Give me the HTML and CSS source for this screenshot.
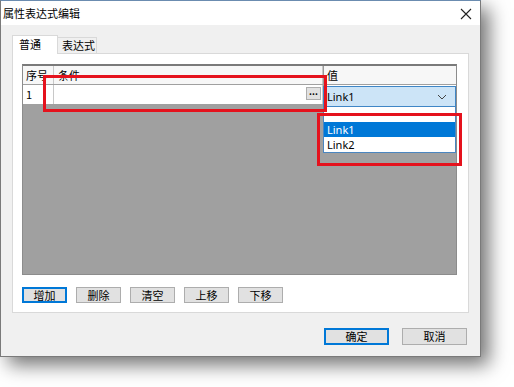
FILE: index.html
```html
<html>
<head>
<title>属性表达式编辑</title>
<link rel="stylesheet" href="styles.css">
</head>
<body>
<div class="window">
  <div class="titlebar">
    <span class="title">属性表达式编辑</span>
    <svg class="close" width="12" height="12" viewBox="0 0 12 12"><path d="M1 1 L11 11 M11 1 L1 11" stroke="#222" stroke-width="1.1"/></svg>
  </div>
  <div class="client">
    <div class="tabs">
      <div class="tab active">普通</div>
      <div class="tab">表达式</div>
    </div>
    <div class="panel">
      <div class="grid">
        <div class="row head">
          <div class="cell c1">序号</div>
          <div class="cell c2">条件</div>
          <div class="cell c3">值</div>
        </div>
        <div class="row">
          <div class="cell c1">1</div>
          <div class="cell c2"><span class="dots">...</span></div>
          <div class="cell c3"></div>
        </div>
      </div>
      <div class="actions">
        <button class="btn default">增加</button>
        <button class="btn">删除</button>
        <button class="btn">清空</button>
        <button class="btn">上移</button>
        <button class="btn">下移</button>
      </div>
    </div>
    <div class="footer">
      <button class="btn wide default">确定</button>
      <button class="btn wide">取消</button>
    </div>
  </div>
</div>

<!-- combo editor + open list over the grid -->
<div class="combo">
  <span>Link1</span>
  <svg width="10" height="6" viewBox="0 0 10 6"><path d="M1 1 L5 5 L9 1" fill="none" stroke="#444" stroke-width="1"/></svg>
</div>
<ul class="droplist">
  <li></li>
  <li class="sel">Link1</li>
  <li>Link2</li>
</ul>

<!-- red annotation boxes -->
<div class="mark mark1"></div>
<div class="mark mark2"></div>
</body>
</html>
```

FILE: styles.css
```css
body {
  margin: 0;
  background: white;
  font-family: "Noto Sans CJK SC", "Noto Sans", sans-serif;
  font-size: 11px;
  color: #000;
}

.window {
  width: 481px;
  height: 357px;
  box-sizing: border-box;
  border: 1px solid #7a7a7a;
  border-top-color: #6b8cb0;
  background: #f0f0f0;
  box-shadow: 8px 8px 18px rgba(0, 0, 0, 0.55);
  display: flex;
  flex-direction: column;
}

.titlebar {
  height: 24px;
  background: white;
  display: flex;
  align-items: center;
  justify-content: space-between;
  padding: 0 8px 0 2px;
}
.title { font-size: 11px; }
.close { margin-top: 1px; }

.client {
  padding: 10px 12px 0 11px;
  display: flex;
  flex-direction: column;
}

.tabs {
  display: flex;
  align-items: flex-end;
  height: 18px;
  position: relative;
  z-index: 1;
}
.tab {
  height: 16px;
  box-sizing: border-box;
  border: 1px solid #d9d9d9;
  border-bottom: none;
  background: #f0f0f0;
  line-height: 14px;
  padding: 0 0 0 4px;
  width: 40px;
  margin-left: -1px;
  white-space: nowrap;
}
.tab.active {
  height: 19px;
  width: 46px;
  margin-left: 0;
  margin-bottom: -1px;
  background: white;
  padding-left: 6px;
  line-height: 17px;
  position: relative;
  z-index: 2;
}

.panel {
  width: 457px;
  height: 260px;
  box-sizing: border-box;
  border: 1px solid #d9d9d9;
  background: white;
  padding: 10px 0 0 9px;
}

.grid {
  width: 435px;
  height: 211px;
  box-sizing: border-box;
  background: #a0a0a0;
  border: 1px solid #8c8c8c;
  border-top: 2px solid #7a7a7a;
}
.row {
  display: flex;
  height: 19px;
  background: white;
  border-bottom: 1px solid #a0a0a0;
}
.row.head {
  height: 18px;
  background: #f7f7f7;
}
.cell {
  box-sizing: border-box;
  border-right: 1px solid #c8c8c8;
  padding-left: 3px;
  line-height: 18px;
  position: relative;
}
.c1 { width: 31px; }
.c2 { width: 269px; }
.c3 { flex: 1; border-right: none; border-left: 1px solid #9a9a9a; }
.head .c2 { padding-left: 4px; }

.dots {
  position: absolute;
  right: 1px;
  top: 2px;
  width: 15px;
  height: 13px;
  box-sizing: border-box;
  background: #e1e1e1;
  border: 1px solid #adadad;
  font-size: 9px;
  line-height: 8px;
  text-align: center;
  font-weight: bold;
}

.actions {
  display: flex;
  gap: 9px;
  margin-top: 12px;
}
.btn {
  width: 45px;
  height: 16px;
  box-sizing: border-box;
  background: #e1e1e1;
  border: 1px solid #adadad;
  font-family: inherit;
  font-size: 11px;
  padding: 0;
  line-height: 13px;
  color: #000;
}
.btn.default {
  border-color: #0078d7;
  box-shadow: inset 0 0 0 1px #0078d7;
}
.btn.wide {
  width: 65px;
  height: 17px;
}

.footer {
  display: flex;
  justify-content: flex-end;
  gap: 13px;
  padding: 15px 1px 0 0;
}

.combo {
  position: absolute;
  left: 323px;
  top: 86px;
  width: 133px;
  height: 21px;
  box-sizing: border-box;
  background: #cce4f7;
  border: 1px solid #3f86c6;
  font-family: "Noto Sans", sans-serif;
  font-size: 11px;
  display: flex;
  align-items: center;
  justify-content: space-between;
  padding: 0 8px 0 3px;
}

.droplist {
  position: absolute;
  left: 323px;
  top: 107px;
  width: 133px;
  margin: 0;
  padding: 0;
  list-style: none;
  box-sizing: border-box;
  border: 1px solid #4a86c0;
  border-top: none;
  background: white;
  font-family: "Noto Sans", sans-serif;
  font-size: 11px;
}
.droplist li {
  height: 15px;
  line-height: 15px;
  padding-left: 3px;
}
.droplist li.sel {
  background: #0078d7;
  color: white;
}

.mark {
  position: absolute;
  border: 3px solid #e5121d;
  box-sizing: border-box;
}
.mark1 { left: 43px; top: 75px; width: 284px; height: 37px; }
.mark2 { left: 317px; top: 113px; width: 145px; height: 53px; }
```
